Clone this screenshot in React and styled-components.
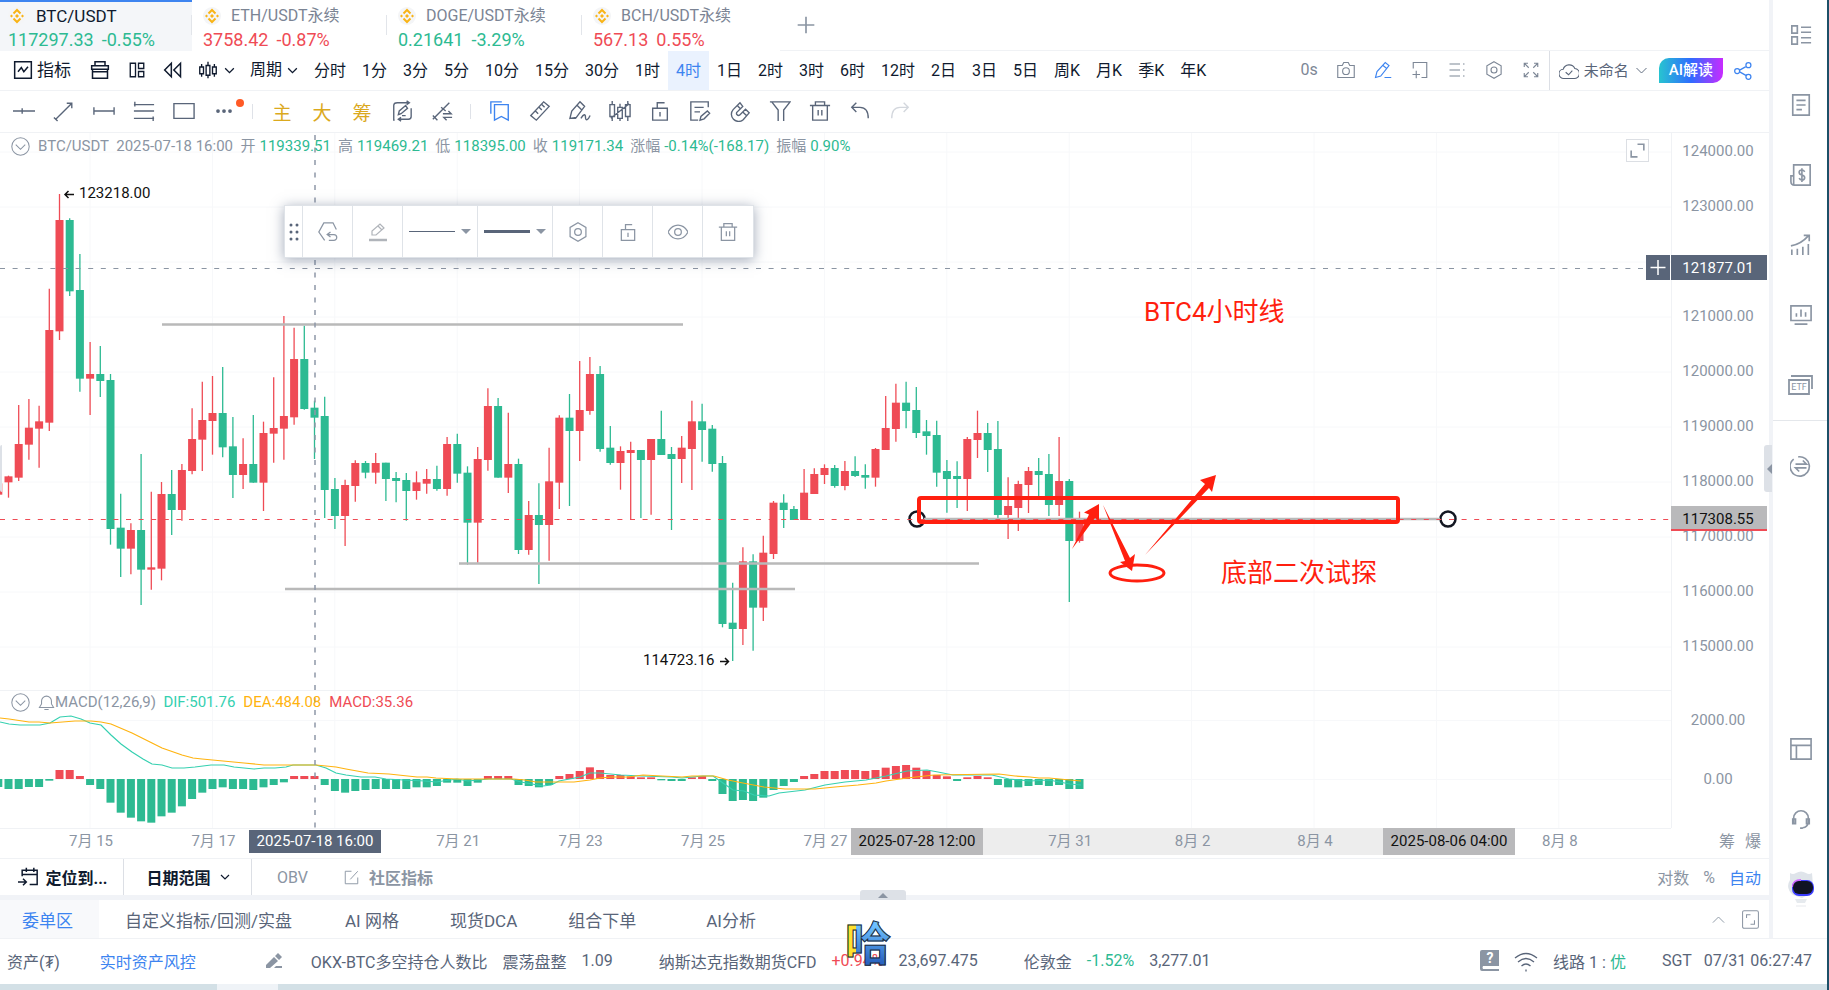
import React from "react"
import styled, { createGlobalStyle, css } from "styled-components"

const UP = "#ef4b55"
const DOWN = "#2dba92"
const INK = "#0f1a2e"
const SLATE = "#596579"
const MUTED = "#8b95a3"
const BLUE = "#3d84f0"
const LINE = "#f0f2f5"
const MARK = "#ff1f0f"

const GlobalStyle = createGlobalStyle`
  * {
    box-sizing: border-box;
  }

  body {
    margin: 0;
    background: #fff;
    color: ${SLATE};
    font-family: Roboto, "Noto Sans CJK SC", sans-serif;
    font-size: 16px;
  }

  button {
    margin: 0;
    padding: 0;
    border: 0;
    background: none;
    color: inherit;
    font: inherit;
    white-space: nowrap;
    cursor: pointer;
  }
`

/* ---------- icons ---------- */

const Glyph = styled.svg`
  display: block;
  flex: none;
  width: ${({ $size }) => $size || 22}px;
  height: ${({ $size }) => $size || 22}px;
  fill: none;
  stroke: currentColor;
  stroke-width: ${({ $weight }) => $weight || 1.5};
`

const paths = {
  indicator: <path d="M2 2h20v20H2zM6 14l4-5 3 5 5-6" />,
  toolbox: <path d="M2 7h20v4H2zM3 11v11h18V11M6 7V2h12v5M3 14h18" />,
  panels: <path d="M3 3h7v18H3zM14 3h7v7h-7zM14 14h7v7h-7z" />,
  rewind: <path d="M10 4v16L2 12zM21 4v16l-8-8z" />,
  candles: <path d="M1 8h5v9H1zM9.500 6h5v13h-5zM18 8h5v9h-5zM3.500 4v4M3.500 17v4M12 1v5M12 19v4M20.500 4v4M20.500 17v4" />,
  down: <path d="M4 8l8 8 8-8" />,
  up: <path d="M3 17l9-9 9 9" />,
  camera: <path d="M1 6h6l2-4h6l2 4h6v16H1zM12 9a4.500 4.500 0 100 9 4.500 4.500 0 000-9z" />,
  pencil: <path d="M2 22l2-8L15 2l5 4L9 20zM12 6l5 4M14 22h9" />,
  frame: <path d="M3 10V2h18v20h-7M7 13v10M2 18h10" />,
  list: <path d="M2 4h14M2 12h14M2 20h14M20 4h2M20 12h2M20 20h2" />,
  hex: <path d="M12 1l9.500 5.500v11L12 23l-9.500-5.500v-11zM12 8a4 4 0 100 8 4 4 0 000-8z" />,
  expand: <path d="M9 9L3 3M3 8V3h5M15 9l6-6M16 3h5v5M9 15l-6 6M3 16v5h5M15 15l6 6M21 16v5h-5" />,
  cloud: <path d="M6 21a5.500 5.500 0 01-1-11 7.500 7.500 0 0114-1A6 6 0 0118 21zM8 13.500l3.500 3 4.500-5" />,
  share: (
    <path d="M5 9a3 3 0 100 6 3 3 0 000-6zM18.500 2a3 3 0 100 6 3 3 0 000-6zM18.500 16a3 3 0 100 6 3 3 0 000-6zM8 11l8-4.500M8 13l8 4.500" />
  ),
  hline: <path d="M0 12h24M10 9v6" />,
  trend: <path d="M3 21L20 4M15 3.500h5.500V9M1 19l4 4" />,
  segment: <path d="M1 12h22M1 8v8M23 8v8" />,
  channel: <path d="M1 5h22M1 12h22M1 20h22M2 2v5M22 18v5" />,
  rect: <path d="M1 4h22v16H1z" />,
  dots: <path d="M4 12h.010M12 12h.010M20 12h.010" strokeWidth="5" strokeLinecap="round" />,
  autodraw: (
    <path d="M7 3h13M17 1l3 2-3 2M4 22h-1V6q0-3 4-3M22 9v9q0 3-3 3H8M11 19l-3 2 3 2M8 16l1-4 7-6 2 3-7 6zM12 17h4" />
  ),
  swapline: <path d="M2 21L20 3M2 17l5 5M11 8l5 4M13 15h9l-3-3M23 19h-9l3 3" />,
  bookmark: <path d="M6 5h15v17l-7.500-4L6 22zM2 15V2h12" />,
  ruler: <path d="M2 17L16 2l6 5L8 22zM7 12l3 3M11 8l3 3M14 5l3 3" />,
  brush: <path d="M1 20l2-8 9-10 5 5-9 12zM9 6l5 5M1 20h7M13 20c3-5 5-5 5-1s3 3 5-2" />,
  patterns: <path d="M1 5h5v13H1zM9.500 8h5v12h-5zM18 5h5v13h-5zM3.500 1v4M3.500 18v5M12 4v4M12 20v3M20.500 1v4M20.500 18v5M2 20L22 4" />,
  unlock: <path d="M4 9h16v13H4zM9 9V3h8M12 13v5" />,
  note: <path d="M21 8V2H2v20h8M6 8h10M6 13h6M12 22l1-4 7-6 2.500 2.500-6 6z" />,
  magnet: <path d="M12 3L4.500 10.500a7.800 7.800 0 0011 11L22 14l-4-4-6.500 6.500a2.200 2.200 0 01-3-3L15 7zM9 6l4 4M15 13l4 4" />,
  funnel: <path d="M1 2h22l-7 9v12M10 23V11L3 2" />,
  trash: <path d="M1 6h22M4 6v16h16V6M7 6V2h10v4M10 11v6M14 11v6" />,
  undo: <path d="M8 3L3 8l5 5M3 8h9c6 0 9 4 9 12" />,
  redo: <path d="M16 3l5 5-5 5M21 8h-9c-6 0-9 4-9 12" />,
  reset: <path d="M8 22L1 12 7 1h11l4 8M15 12l-4 3 4 3M11 15h8a3.500 3.500 0 010 7h-6" />,
  eye: <path d="M0 12c6-11 18-11 24 0-6 11-18 11-24 0zM12 8a4 4 0 100 8 4 4 0 000-8z" />,
  locate: <path d="M5 11V4h18v17h-9M10 1v5M19 1v5M5 9h18M0 18h10M6 14l4 4-4 4" />,
  compose: <path d="M12 2H2v20h20V12M10 15L22 2" />,
  rows: <path d="M2 2h6v8H2zM2 14h6v8H2zM12 3.500h11M12 9h11M12 15h11M12 20.500h11" />,
  doc: <path d="M3 1h18v22H3zM7 7h10M7 12h10M7 17h6" />,
  dollar: (
    <path d="M4 1h18v22H4zM4 13H1v6q0 4 4 4M16 8.500q-1-2-3-2-3 0-3 2.500t3 3 3 3-3 2.500q-2 0-3-2M13 4.500v15" />
  ),
  growth: <path d="M2 23v-6M8 23v-7M14 23v-9M20 23V11M1 13Q12 11 20 2M15 1.500h6V8" />,
  monitor: <path d="M1 2h22v16H1zM5 22h14M7 14v-4M12 14V6M17 14V9" />,
  exchange: <path d="M9 2a10.500 10.500 0 113 21A10.500 10.500 0 014 4.500M6 10h12l-4-4M18 14H6l4 4" />,
  layout: <path d="M1 1h22v22H1zM1 8h22M7 8v15" />,
  headset: <path d="M4 16V11a8 8 0 0116 0v5M20 16q-1 5-6 5.500M3 12v5h3v-5zM18 12v5h3v-5zM11 22h3" />,
  bell: <path d="M2 19h20l-3-5V10a7 7 0 00-14 0v4zM9 22h6" />,
  plus: <path d="M12 2v20M2 12h20" />,
  circleDown: <path d="M12 1a11 11 0 100 22 11 11 0 000-22zM6 9.500l6 6 6-6" />,
  corners: <path d="M12 4h8v8M4 12v8h8" />,
  corners2: <path d="M4 1h16q2 0 2 2v18q0 2-2 2H4q-2 0-2-2V3q0-2 2-2zM7 10V6h5M17 13v5h-5" />,
  wifi: <path d="M1 9q11-9 22 0M4 13q8-7 16 0M7.500 17q4.500-4 9 0M12 20.500v2" />,
}

const Icon = ({ name, size, weight }) => (
  <Glyph viewBox="0 0 24 24" $size={size} $weight={weight} aria-hidden="true">
    {paths[name]}
  </Glyph>
)

/* ---------- frame ---------- */

const Page = styled.div`
  display: flex;
  min-height: 100vh;
  border-right: 2px solid #1c5068;
`

const Shell = styled.div`
  display: flex;
  flex-direction: column;
  flex: 1;
  min-width: 0;
`

const Workspace = styled.div`
  display: flex;
  border-bottom: 1px solid ${LINE};
`

const Main = styled.main`
  position: relative;
  flex: 1;
  min-width: 0;
  border-right: 4px solid #f1f3f7;
`

const Rail = styled.nav`
  display: flex;
  flex-direction: column;
  width: 54px;
  padding-bottom: 14px;
  color: ${MUTED};
`

const RailButton = styled.button`
  display: flex;
  align-items: center;
  justify-content: center;
  width: 55px;
  height: 70px;
`

const RailGroup = styled.div`
  padding-top: 10px;
  flex: 1;
  border-top: 1px solid #e4e7eb;
`

const SideHandle = styled.button`
  position: absolute;
  top: 445px;
  ${({ $left }) => ($left ? "left: 0; width: 2px;" : "right: -3px; width: 8px;")}
  height: 47px;
  border-radius: 3px 0 0 3px;
  background: #dde1e7;

  &::after {
    content: "";
    display: ${({ $left }) => ($left ? "none" : "block")};
    margin-left: 3px;
    border: 5px solid transparent;
    border-right-color: ${MUTED};
    border-left-width: 0;
  }
`

/* ---------- symbol tabs ---------- */

const TabStrip = styled.div`
  display: flex;
  gap: 3px;
  height: 51px;
`

const SymbolTab = styled.button`
  position: relative;
  flex: none;
  width: 192px;
  padding: 4px 0 0 8px;
  line-height: 24px;
  text-align: left;
  color: #7b8494;

  ${({ $active }) =>
    $active &&
    css`
      background: #f4f6f9;
      box-shadow: inset 0 2px ${BLUE};
      color: ${INK};
      font-size: 17px;
    `}

  &::after {
    content: "";
    position: absolute;
    top: 15px;
    right: 0;
    height: 20px;
    border-right: 1px solid #e2e5ea;
  }

  &:nth-child(4)::after {
    display: none;
  }
`

const SymbolName = styled.span`
  display: flex;
  align-items: center;
  gap: 10px;
`

const SymbolQuote = styled.span`
  display: flex;
  gap: 8px;
  font-size: 18px;
  color: ${({ $up }) => ($up ? UP : DOWN)};
`

const AddTab = styled.button`
  display: flex;
  flex: 1;
  align-items: center;
  padding-left: 16px;
  border-bottom: 1px solid ${LINE};
  color: ${MUTED};
`

const Coin = () => (
  <svg width="18" height="18" viewBox="0 0 18 18" aria-hidden="true">
    <circle cx="9" cy="9" r="9" fill="#f4f5f7" />
    <g fill="none" stroke="#f9b416" strokeWidth="2">
      <path d="M5.500 6.500L9 3l3.500 3.500M5.500 11.500L9 15l3.500-3.500" />
    </g>
    <path d="M9 7l2 2-2 2-2-2zM3.500 7.500L5 9l-1.500 1.500L2 9zM14.500 7.500L16 9l-1.500 1.500L13 9z" fill="#f9b416" />
  </svg>
)

const symbols = [
  { name: "BTC/USDT", last: "117297.33", change: "-0.55%", active: true },
  { name: "ETH/USDT永续", last: "3758.42", change: "-0.87%", up: true },
  { name: "DOGE/USDT永续", last: "0.21641", change: "-3.29%" },
  { name: "BCH/USDT永续", last: "567.13", change: "0.55%", up: true },
]

/* ---------- toolbars ---------- */

const PeriodBar = styled.div`
  display: flex;
  align-items: stretch;
  height: 40px;
  padding-left: 13px;
  border-bottom: 1px solid ${LINE};
  line-height: 38px;
  color: ${INK};
`

const ToolButton = styled.button`
  display: flex;
  align-items: center;
  height: 38px;
  gap: ${({ $gap }) => $gap || 4}px;
  margin-right: ${({ $after }) => $after ?? 18}px;
  color: ${({ $color }) => $color || "inherit"};
`

const IndicatorButton = styled(ToolButton)`
  font-size: 17px;
`

const Period = styled.button`
  padding: 0 8px;

  ${({ $active }) =>
    $active &&
    css`
      background: #eaf2fe;
      color: ${BLUE};
    `}
`

const PeriodActions = styled.div`
  display: flex;
  gap: 19px;
  margin-left: auto;
  padding-right: 9px;
  color: #7d8796;
`

const LayoutActions = styled.div`
  display: flex;
  align-items: center;
  gap: 10px;
  padding-right: 16px;
  border-left: 1px solid #dcdfe5;
  padding-left: 9px;
  color: ${SLATE};
`

const LayoutName = styled.button`
  display: flex;
  align-items: center;
  gap: 5px;
  height: 38px;
  font-size: 15px;
`

const ReadButton = styled.button`
  height: 25px;
  padding: 0 10px;
  border-radius: 10px 0 10px 0;
  background: linear-gradient(90deg, #27c4d0, #2f6bff 50%, #c92bff);
  color: #fff;
  font-size: 15px;
  line-height: 25px;
  font-weight: 500;
`

const DrawBar = styled.div`
  display: flex;
  align-items: flex-start;
  height: 42px;
  padding-left: 4px;
  border-bottom: 1px solid ${LINE};
  color: ${SLATE};
`

const DrawButton = styled.button`
  position: relative;
  display: flex;
  align-items: center;
  justify-content: center;
  width: 40px;
  height: 40px;
  font-size: 19px;
  color: ${({ $color }) => $color || "inherit"};
`

const NewDot = styled.i`
  position: absolute;
  top: 8px;
  right: 0;
  width: 8px;
  height: 8px;
  border-radius: 50%;
  background: #ff5a26;
`

const Separator = styled.i`
  width: 1px;
  height: 15px;
  margin: 13px 9px 0 8px;
  background: #dfe2e8;
`

const periods = (
  "分时 1分 3分 5分 10分 15分 30分 1时 4时 1日 2时 3时 6时 12时 2日 3日 5日 周K 月K 季K 年K"
).split(" ")

const drawTools = [
  "hline", "trend", "segment", "channel", "rect", "dots", "|",
  "主", "大", "筹", "autodraw", "swapline", "|",
  "bookmark", "ruler", "brush", "patterns", "unlock", "note", "magnet", "funnel", "trash", "undo", "redo",
]

const drawColors = { 主: "#dba91e", 大: "#dba91e", 筹: "#dba91e", bookmark: BLUE, redo: "#d3d7dd" }

/* ---------- chart ---------- */

const Chart = styled.section`
  position: relative;
  display: flex;
  height: 726px;
  border-bottom: 1px solid ${LINE};
`

const Plot = styled.svg`
  flex: 1;
  min-width: 0;
  height: 725px;
  font-size: 15px;
  fill: ${MUTED};
`

const Axis = styled.svg`
  flex: none;
  width: 98px;
  height: 725px;
  font-size: 15px;
  fill: ${MUTED};
  overflow: visible;
`

const Legend = styled.div`
  position: absolute;
  top: ${({ $top }) => $top}px;
  left: 11px;
  display: flex;
  align-items: center;
  height: 22px;
  line-height: 22px;
  font-size: 15px;
  white-space: pre;
  color: ${MUTED};
`

const LegendToggle = styled.button`
  margin-right: 8px;
`

const LegendValue = styled.span`
  margin: 0 ${({ $near }) => ($near ? 8 : 7)}px 0 ${({ $near }) => ($near ? 0 : 4)}px;
  color: ${({ $color }) => $color || DOWN};
`

const ExpandChart = styled.button`
  position: absolute;
  top: 6px;
  right: 120px;
  padding: 1px;
  border: 1px solid #dcdfe4;
  background: #fff;
  color: ${MUTED};
`

const LinePanel = styled.div`
  position: absolute;
  top: 72px;
  left: 284px;
  display: flex;
  height: 53px;
  border: 1px solid #dfe3e8;
  background: #fff;
  box-shadow: 0 2px 12px rgba(70, 85, 115, 0.5);
`

const PanelCell = styled.button`
  display: flex;
  align-items: center;
  justify-content: center;
  gap: 6px;
  width: ${({ $width }) => $width || 50}px;
  border-right: 1px solid #dfe3e8;
  color: ${MUTED};

  &:last-child {
    border-right: 0;
  }
`

const LineSample = styled.i`
  width: 46px;
  height: ${({ $thick }) => $thick}px;
  background: ${SLATE};
`

const Caret = styled.i`
  border: 5px solid transparent;
  border-top-color: ${MUTED};
  border-bottom-width: 0;
`

const STEP = 10.2
const candleX = i => i * STEP - 1.7

// [up, body top, body bottom, high, low], three units to a pixel
const candles = [
  [1, 1000, 1034, 995, 1034], [1, 979, 997, 977, 1043], [1, 882, 983, 765, 993], [1, 833, 884, 747, 929],
  [1, 814, 836, 767, 953], [1, 540, 818, 416, 843], [1, 210, 544, 132, 570], [0, 210, 424, 205, 438],
  [0, 420, 686, 312, 725], [1, 672, 686, 576, 795], [0, 672, 693, 588, 741], [0, 690, 1137, 672, 1184],
  [0, 1133, 1196, 1031, 1281], [1, 1140, 1196, 1120, 1273], [0, 1140, 1259, 912, 1365], [1, 1252, 1259, 1025, 1319],
  [1, 1032, 1256, 996, 1291], [0, 1032, 1080, 960, 1155], [1, 960, 1080, 942, 1112], [1, 867, 963, 775, 973],
  [1, 810, 869, 695, 963], [1, 789, 813, 678, 914], [0, 789, 892, 651, 922], [0, 889, 975, 801, 1044],
  [1, 942, 975, 865, 1017], [0, 942, 998, 795, 998], [1, 849, 998, 815, 1083], [1, 834, 851, 682, 938],
  [1, 798, 836, 498, 929], [1, 627, 802, 533, 824], [0, 627, 777, 527, 779], [0, 773, 803, 752, 927],
  [0, 798, 1020, 740, 1104], [0, 1017, 1098, 984, 1137], [1, 1005, 1098, 989, 1188], [1, 939, 1008, 931, 1055],
  [0, 939, 968, 933, 985], [1, 939, 968, 909, 1001], [0, 938, 987, 938, 1053], [0, 984, 993, 966, 1057],
  [0, 990, 1023, 969, 1112], [1, 997, 1023, 964, 1049], [1, 987, 1001, 957, 1031], [0, 987, 1017, 947, 1022],
  [1, 882, 1017, 861, 1037], [0, 882, 971, 851, 998], [0, 968, 1118, 949, 1244], [1, 927, 1118, 891, 1238],
  [1, 768, 930, 715, 962], [0, 768, 983, 744, 983], [1, 942, 983, 788, 1029], [0, 942, 1200, 926, 1212],
  [1, 1095, 1200, 1053, 1214], [0, 1095, 1125, 1000, 1302], [1, 994, 1125, 893, 1232], [1, 803, 998, 796, 1077],
  [0, 803, 843, 732, 1068], [1, 780, 843, 633, 933], [1, 672, 783, 621, 794], [0, 672, 897, 648, 905],
  [0, 893, 939, 828, 944], [1, 903, 939, 889, 1019], [1, 900, 909, 875, 1108], [0, 900, 930, 900, 1104],
  [1, 867, 930, 867, 1094], [0, 867, 915, 782, 915], [0, 912, 927, 891, 1140], [1, 893, 927, 858, 999],
  [1, 814, 897, 752, 1020], [0, 814, 840, 761, 935], [0, 836, 942, 825, 965], [0, 939, 1422, 918, 1432],
  [0, 1418, 1437, 1298, 1533], [1, 1234, 1437, 1192, 1485], [0, 1234, 1373, 1213, 1502], [1, 1208, 1373, 1157, 1413],
  [1, 1058, 1212, 1053, 1227], [0, 1058, 1080, 1033, 1134], [0, 1077, 1110, 1068, 1110], [1, 1028, 1110, 957, 1110],
  [1, 972, 1032, 955, 1032], [1, 954, 975, 943, 1002], [0, 954, 1008, 945, 1013], [1, 963, 1008, 933, 1021],
  [0, 963, 978, 919, 981], [0, 975, 983, 943, 1016], [1, 897, 983, 894, 1010], [1, 834, 900, 738, 900],
  [1, 758, 837, 701, 875], [0, 758, 783, 695, 835], [0, 780, 849, 711, 864], [0, 844, 858, 810, 914],
  [0, 855, 968, 812, 1010], [0, 963, 987, 930, 1088], [0, 978, 987, 934, 1074], [1, 867, 987, 861, 1083],
  [1, 849, 870, 782, 924], [0, 849, 900, 819, 966], [0, 897, 1095, 813, 1105], [1, 1068, 1095, 982, 1167],
  [1, 1002, 1074, 992, 1143], [1, 963, 1005, 951, 1089], [0, 963, 975, 924, 1040], [0, 972, 1065, 912, 1098],
  [1, 993, 1065, 861, 1098], [0, 993, 1173, 987, 1356], [1, 1110, 1173, 1085, 1178],
]

const macd = [
  -24, -30, -30, -24, -24, -5, 27, 27, 9, -18, -30, -71, -101, -116, -127, -131, -112, -101, -82, -60, -41, -30,
  -25, -30, -30, -33, -25, -18, -10, 9, 9, 9, -18, -36, -41, -36, -33, -30, -30, -30, -30, -25, -25, -21, -11,
  -11, -21, -11, 9, 9, 9, -18, -21, -25, -18, 9, 15, 24, 35, 27, 12, 12, 8, 5, 5, -4, -6, -6, 5, 9, -6, -45, -66,
  -63, -66, -56, -33, -21, -9, 9, 15, 24, 24, 27, 27, 24, 27, 34, 39, 42, 34, 25, 12, 8, -6, 5, 9, 5, -18, -25,
  -25, -21, -18, -21, -18, -30, -30,
]

const dif =
  "0,589 9,591 20,592 29,592 40,592 50,590 60,584 71,583 81,586 90,590 101,592 111,602 121,611 132,619 143,626 152,631 162,632 172,635 184,635 195,634 211,632 224,632 234,634 254,636 264,635 275,635 286,634 293,632 316,632 326,635 336,640 346,642 361,644 375,644 386,646 404,647 425,648 436,649 457,646 468,648 489,646 511,646 521,649 532,651 543,653 551,652 559,648 580,644 590,640 600,640 621,642 641,643 672,644 682,645 692,644 703,643 713,643 723,650 733,657 744,658 754,662 769,663 779,660 805,657 825,652 845,649 866,647 886,643 907,638 927,637 938,639 953,642 992,642 1009,646 1030,648 1049,647 1070,651 1081,652"

const dea =
  "0,585 9,586 29,589 39,589 50,590 75,588 91,588 101,589 111,591 132,600 152,610 162,615 182,622 193,625 202,626 223,628 244,630 264,632 316,632 336,634 346,636 368,640 389,641 417,644 427,644 436,645 457,646 514,646 525,647 536,649 574,649 590,647 600,645 611,644 628,644 643,642 662,643 682,644 692,643 714,643 728,647 743,650 764,654 785,656 815,656 835,654 858,652 876,650 886,648 907,645 934,642 999,641 1015,643 1030,644 1039,645 1049,645 1070,647 1081,648"

const days = ["7月 15", "7月 17", "", "7月 21", "7月 23", "7月 25", "7月 27", "", "7月 31", "8月 2", "8月 4", "", "8月 8"]
const prices = [124000, 123000, 122000, 121000, 120000, 119000, 118000, 117000, 116000, 115000]
const priceY = price => 19 + ((124000 - price) * 55) / 1000

const Candle = ({ data: [up, top, bottom, high, low], x }) => {
  const color = up ? UP : DOWN
  return (
    <g fill={color} stroke={color}>
      <path d={`M${x} ${high / 3 + 17}V${low / 3 + 17}`} strokeWidth="1.300" />
      <rect x={x - 4} y={top / 3 + 17} width="8" height={(bottom - top) / 3} stroke="none" />
    </g>
  )
}

const PriceChart = () => (
  <Plot role="img" aria-label="BTC/USDT">
    <g stroke="#f7f8fa" strokeWidth="1">
      {days.map((day, i) => (
        <path key={i} d={`M${90 + i * 122.4} 0V695`} />
      ))}
      {prices.map(price => (
        <line key={price} x1="0" x2="100%" y1={priceY(price)} y2={priceY(price)} />
      ))}
      <line x1="0" x2="100%" y1="587.500" y2="587.500" />
      <line x1="0" x2="100%" y1="646.500" y2="646.500" />
      <line x1="0" x2="100%" y1="557.500" y2="557.500" stroke={LINE} />
      <line x1="0" x2="100%" y1="695.500" y2="695.500" stroke={LINE} />
    </g>

    <g fill="#fff" stroke="#131722" strokeWidth="2.500">
      <circle cx="917" cy="386" r="7.500" />
      <circle cx="1448" cy="386" r="7.500" />
    </g>

    {candles.map((data, i) => (
      <Candle key={i} data={data} x={candleX(i)} />
    ))}
    {macd.map((v, i) => (
      <rect
        key={i}
        x={candleX(i) - 4}
        y={v > 0 ? 646 - v / 3 : 646}
        width="8"
        height={Math.abs(v) / 3}
        fill={v > 0 ? UP : DOWN}
      />
    ))}
    <g fill="none" strokeWidth="1.200">
      <polyline points={dif} stroke="#35d0b0" />
      <polyline points={dea} stroke="#ffb30f" />
    </g>

    <g stroke="#b9b9b9" strokeWidth="2.500">
      <path d="M162 191.500H683M459 430.500H979M285 456H795M924 386H1440" />
    </g>
    <line x1="0" x2="100%" y1="386.500" y2="386.500" stroke={UP} strokeDasharray="5 7.600" />
    <line x1="0" x2="100%" y1="135.500" y2="135.500" stroke={MUTED} strokeDasharray="5 7.600" />
    <path d="M315 2V695" stroke="#8f98a8" strokeWidth="1.500" strokeDasharray="5 7.500" />

    <g fill="#111">
      <text x="79" y="65">123218.00</text>
      <text x="643" y="532">114723.16</text>
    </g>
    <path d="M74 61.500H65M68.500 58L65 61.500L68.500 65M720 528.500H728M725 525L728.500 528.500L725 532" stroke="#111" strokeWidth="1.500" fill="none" />

    <g fill="none" stroke={MARK}>
      <rect x="919" y="365" width="479" height="24" rx="2" strokeWidth="4" />
      <ellipse cx="1137" cy="440" rx="27" ry="8" strokeWidth="3" />
    </g>
    <g fill={MARK}>
      <path d="M1099 371L1084 379.500L1089 381.500L1072 416L1095 385L1099 388z" />
      <path d="M1132 438L1120 429L1125 428L1103 372L1130 425L1135 421z" />
      <path d="M1216 342L1200 347L1205 351L1145 422L1209 355L1212 359z" />
      <text x="1144" y="188" fontSize="26">BTC4小时线</text>
      <text x="1221" y="449" fontSize="26">底部二次试探</text>
    </g>

    <rect x="983" y="695" width="400" height="27" fill="#ededed" />
    <g textAnchor="middle">
      {days.map((day, i) => (
        <text key={i} x={91 + i * 122.4} y="713">
          {day}
        </text>
      ))}
    </g>
    <rect x="249" y="697" width="132" height="23" fill="#596579" />
    <rect x="851" y="695" width="132" height="27" fill="#b9b9bb" />
    <rect x="1383" y="695" width="132" height="27" fill="#b9b9bb" />
    <g fill="#111" textAnchor="middle">
      <text x="315" y="713" fill="#fff">2025-07-18 16:00</text>
      <text x="917" y="713">2025-07-28 12:00</text>
      <text x="1449" y="713">2025-08-06 04:00</text>
    </g>
  </Plot>
)

const PriceAxis = () => (
  <Axis textAnchor="middle">
    <path d="M0.500 0V695" stroke={LINE} />
    {prices
      .filter(price => price !== 122000)
      .map(price => (
        <text key={price} x="47" y={priceY(price) + 4}>
          {price}.00
        </text>
      ))}
    <text x="47" y="592">2000.00</text>
    <text x="47" y="651">0.00</text>
    <path d="M0 122h96v25H0z" fill="#596579" />
    <path d="M-25 122h24v25h-24z" fill="#596579" />
    <path d="M-13 127v15M-20.500 134.500h15" stroke="#fff" strokeWidth="1.500" />
    <text x="47" y="140" fill="#fff">121877.01</text>
    <path d="M0 373h96v23H0z" fill="#b9b9bb" />
    <path d="M0 396h96v2H0z" fill={UP} />
    <text x="47" y="391" fill="#111">117308.55</text>
    <text x="56" y="714" fontSize="16">筹</text>
    <text x="82" y="714" fontSize="16">爆</text>
  </Axis>
)

const DragDots = () => (
  <svg width="10" height="18" viewBox="0 0 10 18" fill={SLATE} aria-hidden="true">
    {[2, 9, 16].map(y => (
      <g key={y}>
        <circle cx="2" cy={y} r="1.500" />
        <circle cx="8" cy={y} r="1.500" />
      </g>
    ))}
  </svg>
)

const Highlighter = () => (
  <svg width="20" height="20" viewBox="0 0 20 20" fill="none" stroke="#b0b4ba" aria-hidden="true">
    <path d="M4 13V9l8-7 4 4-8 7zM10 4l4 4" strokeWidth="1.200" />
    <path d="M1 18h18" strokeWidth="2.500" />
  </svg>
)

const readings = [
  ["开", "119339.51"],
  ["高", "119469.21"],
  ["低", "118395.00"],
  ["收", "119171.34"],
  ["涨幅", "-0.14%(-168.17)"],
  ["振幅", "0.90%"],
]

/* ---------- bottom bars ---------- */

const RangeBar = styled.div`
  position: relative;
  display: flex;
  align-items: stretch;
  height: 41px;
  border-bottom: 5px solid #f1f3f7;
  color: ${MUTED};
`

const RangeButton = styled.button`
  display: flex;
  align-items: center;
  justify-content: center;
  gap: 8px;
  width: ${({ $width }) => $width}px;
  padding-left: 2px;
  border-right: 1px solid #dcdfe5;
  font-weight: 700;
  color: ${INK};
`

const QuietButton = styled.button`
  display: flex;
  align-items: center;
  gap: 10px;
  margin-left: ${({ $before }) => $before || 14}px;
  font-weight: ${({ $bold }) => ($bold ? 700 : 400)};
  color: ${({ $active }) => ($active ? BLUE : "inherit")};
`

const ScaleOptions = styled.div`
  display: flex;
  margin-left: auto;
  padding-right: 8px;
`

const DockHandle = styled.button`
  position: absolute;
  left: 50%;
  bottom: -5px;
  display: flex;
  align-items: center;
  justify-content: center;
  width: 46px;
  height: 10px;
  margin-left: -25px;
  border-radius: 3px 3px 0 0;
  background: #dde1e7;

  &::after {
    content: "";
    border: 5px solid transparent;
    border-bottom-color: ${MUTED};
    border-top-width: 0;
  }
`

const DockTabs = styled.div`
  display: flex;
  height: 38px;
  font-size: 17px;
`

const DockTab = styled.button`
  padding: 0 25px;
  margin-right: ${({ $after }) => $after || 1}px;

  ${({ $active }) =>
    $active &&
    css`
      padding: 0 26px 0 22px;
      background: #f8f9fb;
      color: ${BLUE};
    `}
`

const DockActions = styled.div`
  display: flex;
  align-items: center;
  gap: 15px;
  margin-left: auto;
  padding-right: 9px;
  color: ${MUTED};
`

const StatusBar = styled.footer`
  position: relative;
  display: flex;
  align-items: center;
  height: 45px;
  padding: 0 15px 2px 7px;
  white-space: nowrap;
`

const StatusGroup = styled.div`
  display: flex;
  align-items: center;
  gap: 15px;
  margin-right: ${({ $after }) => $after || 0}px;
  margin-left: ${({ $push }) => ($push ? "auto" : 0)};
`

const StatusLink = styled.a`
  margin: 0 70px 0 40px;
  color: ${BLUE};
  text-decoration: none;
`

const Change = styled.span`
  color: ${({ $up }) => ($up ? UP : DOWN)};
`

const Sticker = styled.span`
  position: absolute;
  top: -25px;
  left: 845px;
  font-size: 46px;
  line-height: 60px;
  font-weight: 700;
  background: linear-gradient(90deg, #ffe12e 24%, transparent 24%), linear-gradient(#6cc0ff 20%, #2a64c0 80%);
  background-clip: text;
  color: transparent;
  -webkit-text-stroke: 1px #222c3c;
`

const DesktopEdge = styled.div`
  display: flex;
  flex: 1;
  min-height: 5px;
  background: #d3e0e6;

  &::before {
    content: "";
    width: 61px;
    margin-left: 217px;
    background: #eff3f7;
  }
`

const Robot = () => (
  <svg width="28" height="38" viewBox="0 0 28 38" aria-hidden="true">
    <path d="M3 3q3 2 6 0 5-3 10 0 3 2 6 0l1 12-3 9-8 4-9-3Q-2 18 3 10z" fill="#dfe4ea" />
    <path d="M8 29h12l-2 4h-8z" fill="#e6eaee" />
    <rect x="5" y="10" width="22" height="16" rx="7" fill="#3a3cff" />
    <path d="M6 17q0-7 8-7" stroke="#cf66ff" strokeWidth="2" fill="none" />
    <rect x="6" y="11" width="20" height="13" rx="6" fill="#101424" />
    <path d="M9 36h10" stroke="#f3f4f6" strokeWidth="2" />
  </svg>
)

const EtfIcon = () => (
  <svg width="26" height="22" viewBox="0 0 26 22" fill="none" stroke="currentColor" aria-hidden="true">
    <path d="M1 6h20v14H1zM3 2h21v13" strokeWidth="1.800" />
    <text x="11" y="16" textAnchor="middle" fontSize="9" fill="currentColor" stroke="none">ETF</text>
  </svg>
)

const BookIcon = () => (
  <svg width="19" height="21" viewBox="0 0 19 21" fill={MUTED} aria-hidden="true">
    <path d="M2 0h17v16H3q-1 1.500 0 3h16v2H2q-2 0-2-2V2q0-2 2-2z" />
    <text x="10" y="13" textAnchor="middle" fontSize="14" fontWeight="700" fill="#fff">?</text>
  </svg>
)

const EditPen = () => (
  <svg width="16" height="16" viewBox="0 0 16 16" fill={MUTED} aria-hidden="true">
    <path d="M0 12l8-8 4 4-8 7H0zM9 3l3-3 4 4-3 3zM8 15l2-2h6v2z" />
  </svg>
)

const dockTabs = [
  { name: "委单区", active: true },
  { name: "自定义指标/回测/实盘", after: 3 },
  { name: "AI 网格" },
  { name: "现货DCA" },
  { name: "组合下单", after: 20 },
  { name: "AI分析" },
]

export default function App() {
  return (
    <Page>
      <GlobalStyle />
      <Shell>
        <Workspace>
          <Main>
            <TabStrip>
              {symbols.map(({ name, last, change, active, up }) => (
                <SymbolTab key={name} $active={active}>
                  <SymbolName>
                    <Coin />
                    {name}
                  </SymbolName>
                  <SymbolQuote $up={up}>
                    <span>{last}</span>
                    <span>{change}</span>
                  </SymbolQuote>
                </SymbolTab>
              ))}
              <AddTab aria-label="Add symbol">
                <Icon name="plus" size={20} weight={2} />
              </AddTab>
            </TabStrip>

            <PeriodBar>
              <IndicatorButton $after={19}>
                <Icon name="indicator" size={20} weight={1.8} />
                指标
              </IndicatorButton>
              <ToolButton aria-label="Toolbox">
                <Icon name="toolbox" size={20} weight={1.8} />
              </ToolButton>
              <ToolButton $after={17} aria-label="Layout">
                <Icon name="panels" size={18} weight={1.8} />
              </ToolButton>
              <ToolButton $after={16} aria-label="Replay">
                <Icon name="rewind" size={20} weight={1.8} />
              </ToolButton>
              <ToolButton $after={14} $gap={6} aria-label="Chart type">
                <Icon name="candles" size={18} weight={1.8} />
                <Icon name="down" size={13} weight={2.4} />
              </ToolButton>
              <ToolButton $after={7}>
                周期
                <Icon name="down" size={13} weight={2.4} />
              </ToolButton>
              {periods.map(period => (
                <Period key={period} $active={period === "4时"}>
                  {period}
                </Period>
              ))}
              <PeriodActions>
                <span>0s</span>
                {["camera", "pencil", "frame", "list", "hex", "expand"].map(name => (
                  <ToolButton key={name} $after={0} $color={name === "pencil" && BLUE} aria-label={name}>
                    <Icon name={name} size={18} />
                  </ToolButton>
                ))}
              </PeriodActions>
              <LayoutActions>
                <LayoutName>
                  <Icon name="cloud" size={20} weight={1.3} />
                  未命名
                  <Icon name="down" size={15} />
                </LayoutName>
                <ReadButton>AI解读</ReadButton>
                <ToolButton $after={0} $color={BLUE} aria-label="Share">
                  <Icon name="share" size={20} />
                </ToolButton>
              </LayoutActions>
            </PeriodBar>

            <DrawBar>
              {drawTools.map((tool, i) =>
                tool === "|" ? (
                  <Separator key={i} />
                ) : (
                  <DrawButton key={tool} $color={drawColors[tool]} aria-label={tool}>
                    {paths[tool] ? <Icon name={tool} size={tool === "dots" ? 18 : 22} /> : tool}
                    {tool === "dots" && <NewDot />}
                  </DrawButton>
                )
              )}
            </DrawBar>

            <Chart>
              <PriceChart />
              <PriceAxis />
              <Legend $top={2}>
                <LegendToggle aria-label="Collapse price">
                  <Icon name="circleDown" size={19} weight={1.3} />
                </LegendToggle>
                <span>{"BTC/USDT  2025-07-18 16:00  "}</span>
                {readings.map(([label, value]) => (
                  <span key={label}>
                    {label}
                    <LegendValue>{value}</LegendValue>
                  </span>
                ))}
              </Legend>
              <Legend $top={558}>
                <LegendToggle aria-label="Collapse MACD">
                  <Icon name="circleDown" size={19} weight={1.3} />
                </LegendToggle>
                <Icon name="bell" size={17} />
                {"MACD(12,26,9)  "}
                <LegendValue $near $color="#35d0b0">DIF:501.76</LegendValue>
                <LegendValue $near $color="#ffb30f">DEA:484.08</LegendValue>
                <LegendValue $near $color={UP}>MACD:35.36</LegendValue>
              </Legend>
              <ExpandChart aria-label="Expand chart">
                <Icon name="corners" size={19} weight={2} />
              </ExpandChart>
              <LinePanel>
                <PanelCell $width={18} aria-label="Move">
                  <DragDots />
                </PanelCell>
                <PanelCell aria-label="Reset">
                  <Icon name="reset" size={20} />
                </PanelCell>
                <PanelCell aria-label="Color">
                  <Highlighter />
                </PanelCell>
                <PanelCell $width={75} aria-label="Line style">
                  <LineSample $thick={1} />
                  <Caret />
                </PanelCell>
                <PanelCell $width={75} aria-label="Line width">
                  <LineSample $thick={3} />
                  <Caret />
                </PanelCell>
                {["hex", "unlock", "eye", "trash"].map(name => (
                  <PanelCell key={name} aria-label={name}>
                    <Icon name={name} size={20} />
                  </PanelCell>
                ))}
              </LinePanel>
            </Chart>

            <RangeBar>
              <RangeButton $width={124}>
                <Icon name="locate" size={20} weight={1.8} />
                定位到...
              </RangeButton>
              <RangeButton $width={128}>
                日期范围
                <Icon name="down" size={12} weight={2.4} />
              </RangeButton>
              <QuietButton $before={25}>OBV</QuietButton>
              <QuietButton $before={36} $bold>
                <Icon name="compose" size={15} />
                社区指标
              </QuietButton>
              <ScaleOptions>
                <QuietButton>对数</QuietButton>
                <QuietButton>%</QuietButton>
                <QuietButton $active>自动</QuietButton>
              </ScaleOptions>
              <DockHandle aria-label="Resize dock" />
            </RangeBar>

            <DockTabs>
              {dockTabs.map(({ name, active, after }) => (
                <DockTab key={name} $active={active} $after={after}>
                  {name}
                </DockTab>
              ))}
              <DockActions>
                <Icon name="up" size={15} />
                <Icon name="corners2" size={19} weight={1.3} />
              </DockActions>
            </DockTabs>
            <SideHandle $left aria-label="Open left panel" />
            <SideHandle aria-label="Open right panel" />
          </Main>

          <Rail>
            {["rows", "doc", "dollar", "growth", "monitor"].map(name => (
              <RailButton key={name} aria-label={name}>
                <Icon name={name} weight={1.8} />
              </RailButton>
            ))}
            <RailButton aria-label="ETF">
              <EtfIcon />
            </RailButton>
            <RailGroup>
              <RailButton aria-label="Exchange">
                <Icon name="exchange" weight={1.8} />
              </RailButton>
            </RailGroup>
            <RailButton aria-label="Layouts">
              <Icon name="layout" weight={1.8} />
            </RailButton>
            <RailButton aria-label="Support">
              <Icon name="headset" weight={1.8} />
            </RailButton>
            <RailButton aria-label="Assistant">
              <Robot />
            </RailButton>
          </Rail>
        </Workspace>

        <StatusBar>
          资产(₮)
          <StatusLink href="#risk">实时资产风控</StatusLink>
          <StatusGroup $after={29}>
            <EditPen />
          </StatusGroup>
          <StatusGroup $after={46}>
            <span>OKX-BTC多空持仓人数比</span>
            <span>震荡盘整</span>
            <span>1.09</span>
          </StatusGroup>
          <StatusGroup $after={46}>
            <span>纳斯达克指数期货CFD</span>
            <Change $up>+0.94%</Change>
            <span>23,697.475</span>
          </StatusGroup>
          <StatusGroup>
            <span>伦敦金</span>
            <Change>-1.52%</Change>
            <span>3,277.01</span>
          </StatusGroup>
          <StatusGroup $push $after={36}>
            <BookIcon />
            <Icon name="wifi" size={24} weight={1.3} />
            <span>
              线路 1 : <Change>优</Change>
            </span>
          </StatusGroup>
          <span>SGT&nbsp;&nbsp; 07/31 06:27:47</span>
          <Sticker>哈</Sticker>
        </StatusBar>
        <DesktopEdge />
      </Shell>
    </Page>
  )
}
